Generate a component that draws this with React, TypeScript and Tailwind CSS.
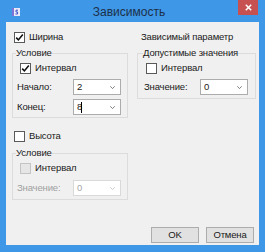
import type { ReactNode } from "react";

const font = { fontFamily: '"Liberation Sans", Arial, sans-serif' };

function Check({ checked, disabled }: { checked?: boolean; disabled?: boolean }) {
  return (
    <span
      className={`flex h-[11px] w-[11px] shrink-0 items-center justify-center border ${
        disabled ? "border-[#c4c4c4] bg-[#e6e6e6]" : "border-[#5a5a5a] bg-white"
      }`}
    >
      {checked && (
        <svg width="9" height="9" viewBox="0 0 9 9">
          <path d="M1.2 4.6 L3.4 6.9 L7.8 1.6" fill="none" stroke="#111" strokeWidth="1.6" />
        </svg>
      )}
    </span>
  );
}

function CheckRow({ label, checked, disabled, className = "" }: any) {
  return (
    <div className={`flex h-[12px] items-center gap-[4px] leading-[12px] ${className}`}>
      <Check checked={checked} disabled={disabled} />
      <span>{label}</span>
    </div>
  );
}

function Combo({ value, disabled, cursor }: { value: string; disabled?: boolean; cursor?: boolean }) {
  return (
    <div
      className={`flex h-[16px] w-[48px] items-center justify-between bg-white pl-[3px] pr-[5px] ${
        disabled ? "border border-[#d9d9d9] text-[#a8a8a8]" : "border border-[#acacac]"
      }`}
    >
      <span className="flex items-center leading-[12px]">
        {value}
        {cursor && <span className="-ml-[1px] h-[11px] w-[1px] bg-black" />}
      </span>
      <svg width="5" height="3" viewBox="0 0 5 3">
        <path d="M0.3 0.3 L2.5 2.6 L4.7 0.3" fill="none" stroke={disabled ? "#c8c8c8" : "#707070"} strokeWidth="0.9" />
      </svg>
    </div>
  );
}

function ComboRow({ label, value, disabled, cursor, className = "" }: any) {
  return (
    <div className={`flex items-center ${className}`}>
      <span className={`w-[56px] leading-[12px] ${disabled ? "text-[#a0a0a0]" : ""}`}>{label}</span>
      <Combo value={value} disabled={disabled} cursor={cursor} />
    </div>
  );
}

function Group({
  title,
  legendClass,
  className = "",
  bodyClass = "",
  children,
}: {
  title: string;
  legendClass: string;
  className?: string;
  bodyClass?: string;
  children: ReactNode;
}) {
  return (
    <fieldset className={`border border-[#dcdcdc] p-0 ${className}`}>
      <legend className={`p-0 leading-[12px] ${legendClass}`}>{title}</legend>
      <div className={bodyClass}>{children}</div>
    </fieldset>
  );
}

export default function App() {
  return (
    <div
      className="flex h-[252px] w-[265px] flex-col bg-[#3f97e8] text-[9.5px] tracking-[-0.15px] text-[#1a1a1a]"
      style={font}
    >
      {/* title bar */}
      <div className="flex h-[22px] shrink-0 items-start">
        <svg className="ml-[12px] mt-[8px]" width="8" height="8" viewBox="0 0 8 8">
          <rect width="8" height="8" fill="#eceaf8" />
          <rect width="2" height="8" fill="#7d74d6" />
          <path d="M6 2.2 H4 V4 H5.6 V6 H3.4" fill="none" stroke="#3a55c8" strokeWidth="1" />
        </svg>
        <div className="flex-1 pt-[5px] text-center text-[12px] leading-[15px] tracking-normal text-[#1c3048]">
          Зависимость
        </div>
        <div className="mr-[7px] flex h-[15px] w-[20px] items-center justify-center bg-[#c75050]">
          <svg width="7" height="7" viewBox="0 0 7 7">
            <path d="M0.8 0.8 L6.2 6.2 M6.2 0.8 L0.8 6.2" stroke="#fff" strokeWidth="1.5" />
          </svg>
        </div>
      </div>

      {/* client area */}
      <div className="mx-[6px] mb-[7px] flex flex-1 flex-col bg-[#f0f0f0] pl-[6px] pr-[3px]">
        <div className="mt-[9px] flex gap-[9px]">
          <div className="flex w-[116px] flex-col">
            <CheckRow label="Ширина" checked className="ml-[2px]" />
            <Group title="Условие" legendClass="ml-[3px]" className="mt-[4px]" bodyClass="pb-[2px] pl-[4px] pt-[3px]">
              <CheckRow label="Интервал" checked className="ml-[3px]" />
              <ComboRow label="Начало:" value="2" className="mt-[5px]" />
              <ComboRow label="Конец:" value="8" cursor className="mt-[4px]" />
            </Group>
          </div>
          <div className="flex flex-1 flex-col">
            <div className="ml-[4px] h-[12px] leading-[12px]">Зависимый параметр</div>
            <Group
              title="Допустимые значения"
              legendClass="ml-[5px]"
              className="mt-[4px]"
              bodyClass="pb-[3px] pl-[6px] pt-[3px]"
            >
              <CheckRow label="Интервал" className="ml-[2px]" />
              <ComboRow label="Значение:" value="0" className="mt-[5px]" />
            </Group>
          </div>
        </div>

        <div className="flex w-[116px] flex-col">
          <CheckRow label="Высота" className="ml-[2px] mt-[12px]" />
          <Group title="Условие" legendClass="ml-[3px]" className="mt-[5px]" bodyClass="pb-[3px] pl-[4px] pt-[3px]">
            <CheckRow label="Интервал" disabled className="ml-[3px]" />
            <ComboRow label="Значение:" value="0" disabled className="mt-[6px]" />
          </Group>
        </div>

        <div className="mb-[2px] mr-[2px] mt-auto flex justify-end gap-[7px]">
          <button className="h-[16px] w-[48px] border border-[#adadad] bg-[#e1e1e1] leading-[14px]">OK</button>
          <button className="h-[16px] w-[48px] border border-[#adadad] bg-[#e1e1e1] leading-[14px]">Отмена</button>
        </div>
      </div>
    </div>
  );
}
